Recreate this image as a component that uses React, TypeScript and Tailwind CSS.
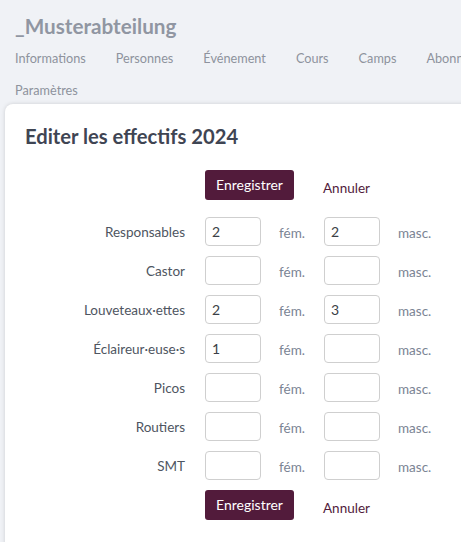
import React from "react";

const rows: [string, string, string][] = [
  ["Responsables", "2", "2"],
  ["Castor", "", ""],
  ["Louveteaux·ettes", "2", "3"],
  ["Éclaireur·euse·s", "1", ""],
  ["Picos", "", ""],
  ["Routiers", "", ""],
  ["SMT", "", ""],
];

function Buttons() {
  return (
    <div className="flex items-center h-[29px]">
      <div className="w-[200px] shrink-0" />
      <button className="h-[30px] w-[89px] rounded-[3px] bg-[#521b3b] text-white text-[14px] leading-none">
        Enregistrer
      </button>
      <span className="ml-[29px] text-[13.5px] text-[#521b3b] mt-[8px]">Annuler</span>
    </div>
  );
}

export default function App() {
  return (
    <div
      className="w-[461px] h-[542px] overflow-hidden bg-[#f0f2f6]"
      style={{ fontFamily: "Lato, 'Liberation Sans', sans-serif" }}
    >
      <div className="pl-[15px] pt-[12px]">
        <h1 className="text-[20.7px] font-bold text-[#9096a2] leading-[28px]">_Musterabteilung</h1>
        <nav className="w-[560px] flex flex-wrap gap-x-[30px] mt-[6px] text-[12.7px] text-[#8e939d]">
          <span className="h-[32px] leading-[24px]">Informations</span>
          <span className="h-[32px] leading-[24px]">Personnes</span>
          <span className="h-[32px] leading-[24px]">Événement</span>
          <span className="h-[32px] leading-[24px]">Cours</span>
          <span className="h-[32px] leading-[24px]">Camps</span>
          <span className="h-[32px] leading-[24px]">Abonnements</span>
          <span className="h-[32px] leading-[24px]">Paramètres</span>
        </nav>
      </div>
      <div className="ml-[5px] mt-[-6px] w-[480px] h-[460px] bg-white rounded-[8px] shadow-[0_0_4px_rgba(0,0,0,0.15)] pt-[18px]">
        <h2 className="pl-[20px] text-[20.2px] font-bold text-[#3f4553] leading-[28px]">Editer les effectifs 2024</h2>
        <div className="mt-[20px] flex flex-col">
          <Buttons />
          <div className="mt-[18px] flex flex-col gap-[10px]">
            {rows.map(([label, f, m]) => (
              <div key={label} className="flex items-center h-[29px]">
                <div className="w-[180px] shrink-0 text-right text-[13.5px] text-[#4e5561] pt-[2px]">{label}</div>
                <div className="w-[20px] shrink-0" />
                <input
                  readOnly
                  value={f}
                  className="w-[56px] h-[29px] rounded-[4px] border border-[#cfcfcf] px-[6px] text-[14px] text-[#3b3f47] outline-none"
                />
                <span className="ml-[18px] w-[45px] text-[13.5px] text-[#7b8494] pt-[3px]">fém.</span>
                <input
                  readOnly
                  value={m}
                  className="w-[56px] h-[29px] rounded-[4px] border border-[#cfcfcf] px-[6px] text-[14px] text-[#3b3f47] outline-none"
                />
                <span className="ml-[18px] text-[13.5px] text-[#7b8494] pt-[3px]">masc.</span>
              </div>
            ))}
          </div>
          <div className="mt-[10px]">
            <Buttons />
          </div>
        </div>
      </div>
    </div>
  );
}
